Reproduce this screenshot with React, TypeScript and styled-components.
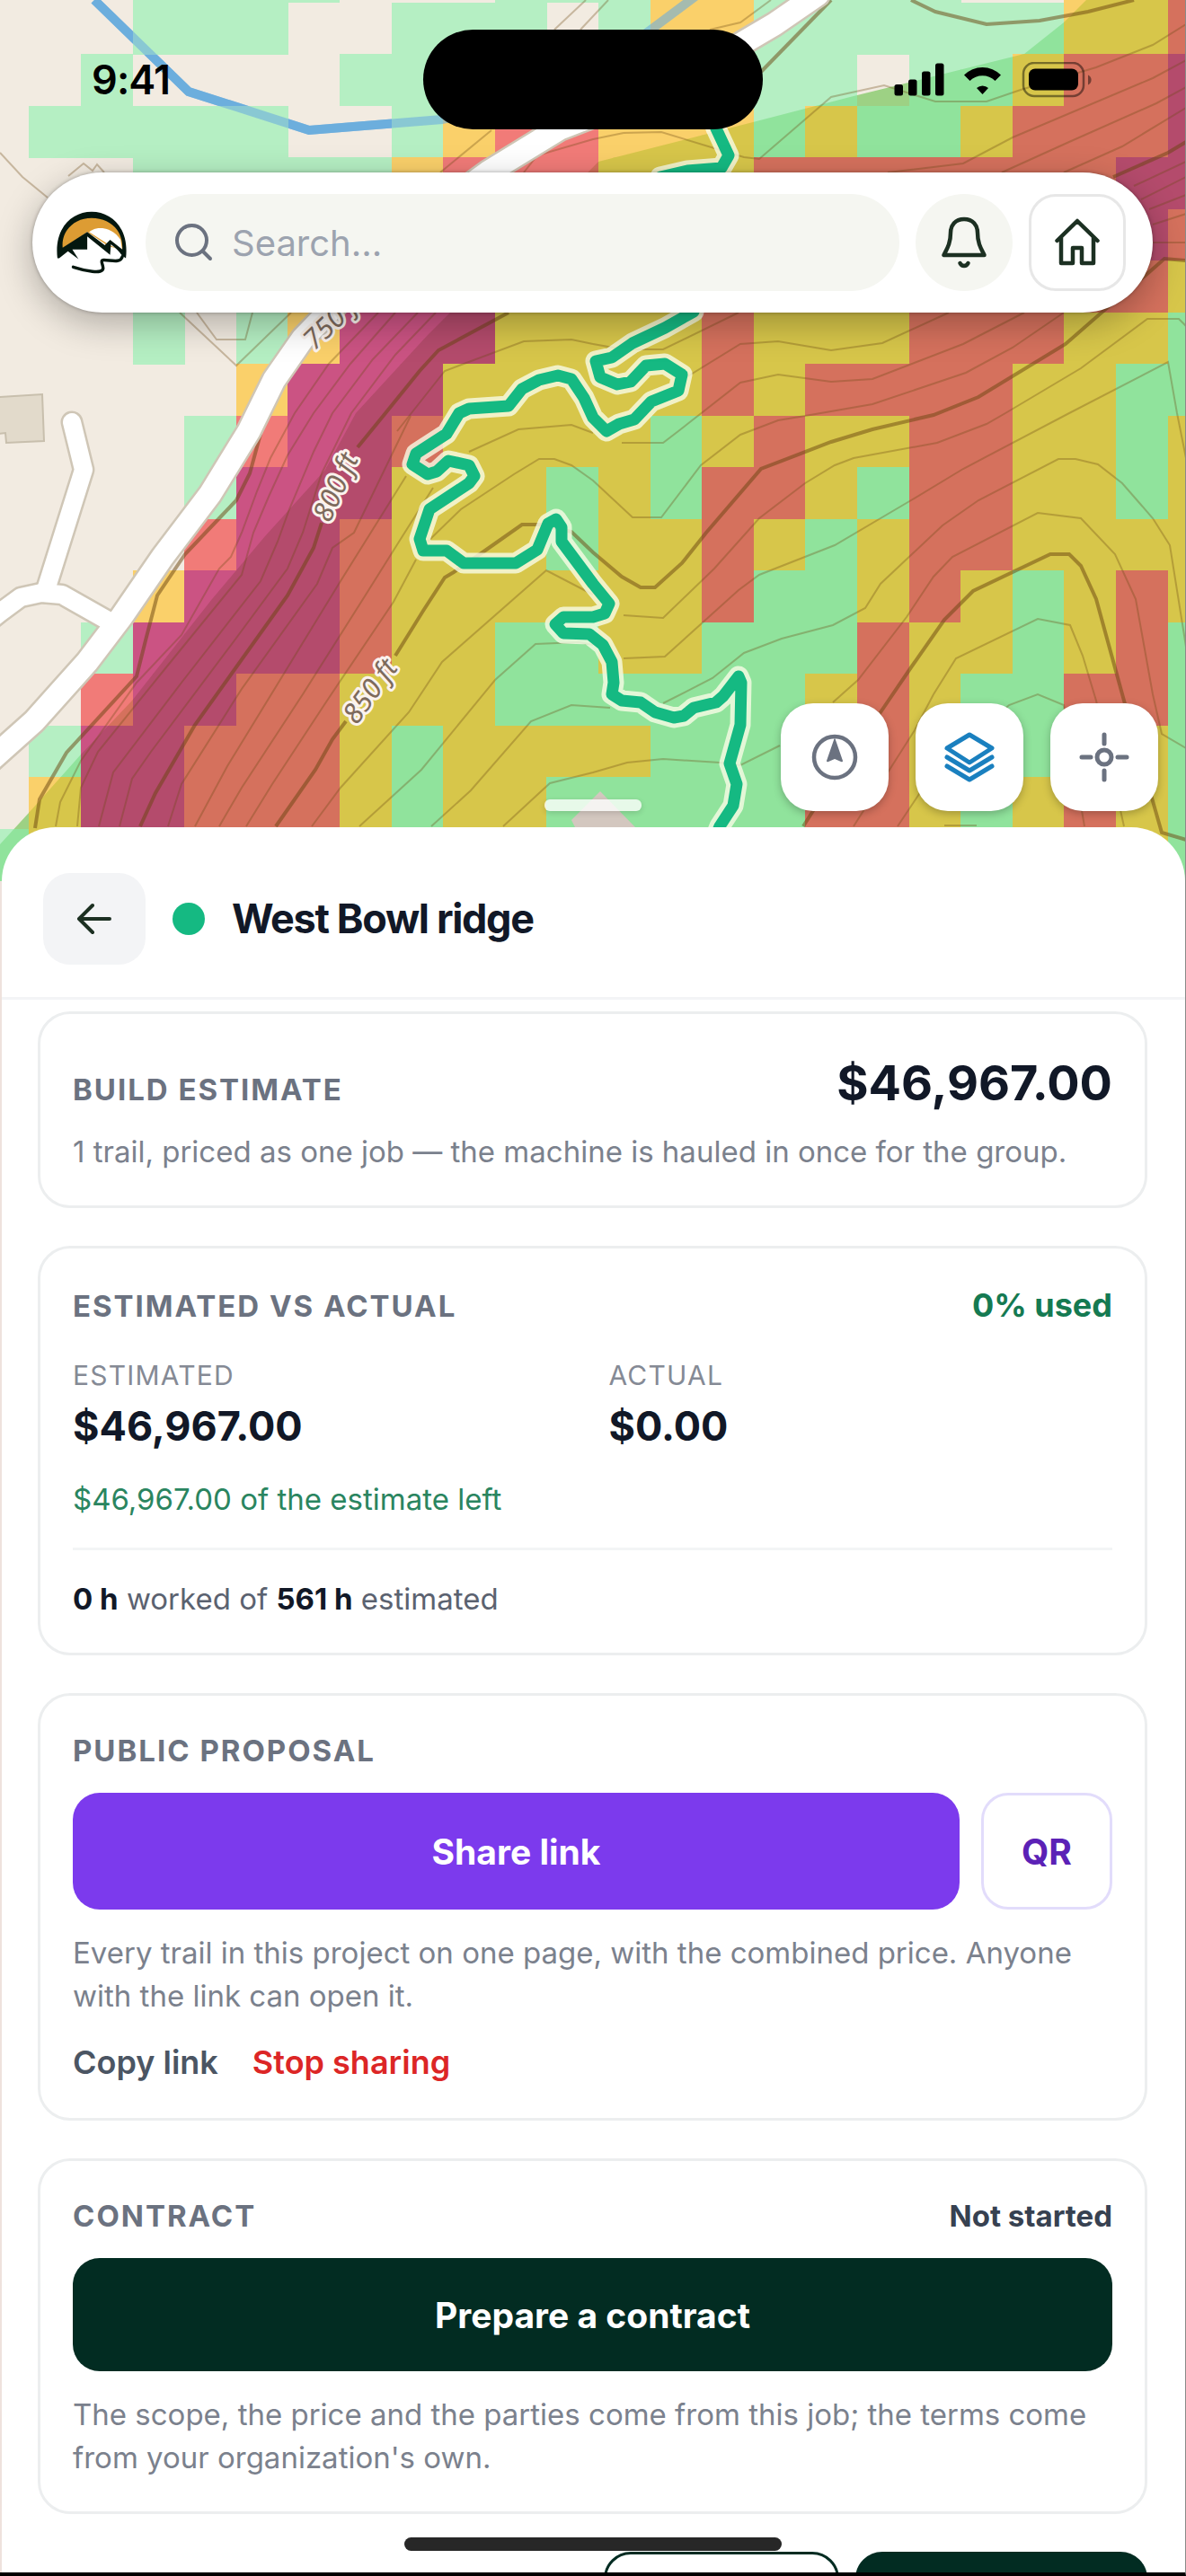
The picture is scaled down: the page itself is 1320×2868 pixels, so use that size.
import React from "react";
import styled, { createGlobalStyle } from "styled-components";

const GlobalStyle = createGlobalStyle`
  * {
    box-sizing: border-box;
  }
  body {
    margin: 0;
    background: #ffffff;
    font-family: Inter, "Liberation Sans", sans-serif;
    color: #111827;
  }
  button, input {
    font-family: inherit;
  }
  p, h1, h2, dl, dt, dd {
    margin: 0;
  }
`;

const Screen = styled.div`
  position: relative;
  height: 100vh;
  overflow: hidden;
  display: flex;
  flex-direction: column;
  border-right: 1px solid #8a8a88;
  border-bottom: 4px solid #000000;
  background: #eee2dd;
`;

/* ---------- map ---------- */

const MapArea = styled.header`
  position: relative;
  flex: none;
  height: 981px;
  display: flex;
  flex-direction: column;
  padding-bottom: 78px;
  overflow: hidden;
  .map {
    position: absolute;
    inset: 0;
    width: 100%;
    height: 100%;
  }
`;

const StatusBar = styled.div`
  position: relative;
  display: grid;
  grid-template-columns: 1fr 378px 1fr;
  align-items: center;
  padding-top: 33px;
  .time {
    padding-left: 102px;
    font-size: 45px;
    line-height: 54px;
    font-weight: 600;
    letter-spacing: -0.02em;
    color: #000000;
  }
  .island {
    height: 111px;
    border-radius: 56px;
    background: #000000;
  }
  .signals {
    display: flex;
    justify-content: flex-end;
    align-items: center;
    padding-right: 102px;
  }
`;

const TopBar = styled.div`
  position: relative;
  display: flex;
  align-items: center;
  gap: 18px;
  height: 156px;
  margin: 48px 36px 0;
  padding: 0 30px 0 24px;
  border-radius: 78px;
  background: #ffffff;
  box-shadow: 0 0 4px rgba(0, 0, 0, 0.3), 0 12px 40px rgba(0, 0, 0, 0.28);
`;

const SearchBox = styled.label`
  flex: 1;
  min-width: 0;
  height: 108px;
  display: flex;
  align-items: center;
  gap: 18px;
  padding: 0 30px;
  border-radius: 54px;
  background: #f5f6f1;
  svg {
    flex: none;
  }
  input {
    flex: 1;
    min-width: 0;
    border: 0;
    padding: 0;
    outline: none;
    background: transparent;
    font-size: 40px;
    color: #111827;
    &::placeholder {
      color: #9ca3af;
      opacity: 1;
    }
  }
`;

const BarButton = styled.button<{ $outlined?: boolean }>`
  flex: none;
  width: 108px;
  height: 108px;
  display: flex;
  justify-content: center;
  align-items: center;
  padding: 0;
  border: ${(p) => (p.$outlined ? "3px solid #e7e7e7" : "0")};
  border-radius: ${(p) => (p.$outlined ? "30px" : "54px")};
  background: ${(p) => (p.$outlined ? "#ffffff" : "#f5f6f1")};
`;

const MapControls = styled.div`
  position: relative;
  display: flex;
  justify-content: flex-end;
  gap: 30px;
  margin-top: auto;
  padding-right: 30px;
`;

const MapButton = styled.button`
  width: 120px;
  height: 120px;
  display: flex;
  justify-content: center;
  align-items: center;
  padding: 0;
  border: 0;
  border-radius: 36px;
  background: #ffffff;
  box-shadow: 0 3px 10px rgba(0, 0, 0, 0.25);
`;

const DragHandle = styled.div`
  position: absolute;
  left: 50%;
  bottom: 78px;
  width: 108px;
  height: 13px;
  margin-left: -54px;
  border-radius: 6px;
  background: rgba(255, 255, 255, 0.78);
  box-shadow: 0 2px 6px rgba(0, 0, 0, 0.15);
`;

/* ---------- sheet ---------- */

const Sheet = styled.main`
  position: relative;
  flex: 1;
  min-height: 0;
  margin: -60px 0 0 2px;
  display: flex;
  flex-direction: column;
  overflow: hidden;
  border-radius: 60px 60px 0 0;
  background: #ffffff;
`;

const SheetHeader = styled.div`
  flex: none;
  display: flex;
  align-items: center;
  gap: 30px;
  padding: 51px 46px 36px;
  border-bottom: 3px solid #f3f4f6;
  h1 {
    font-size: 45px;
    line-height: 60px;
    font-weight: 700;
    letter-spacing: -0.03em;
  }
`;

const BackButton = styled.button`
  width: 114px;
  height: 102px;
  display: flex;
  justify-content: center;
  align-items: center;
  padding: 0;
  border: 0;
  border-radius: 30px;
  background: #f3f4f6;
`;

const Dot = styled.span`
  width: 36px;
  height: 36px;
  border-radius: 50%;
  background: #15b982;
`;

const SheetBody = styled.div`
  flex: 1;
  min-height: 0;
  overflow: hidden;
  display: flex;
  flex-direction: column;
  gap: 42px;
  padding: 13px 42px 0 40px;
  & > * {
    flex: none;
  }
`;

const Card = styled.section`
  padding: 36px;
  border: 3px solid #eceeef;
  border-radius: 36px;
  background: #ffffff;
`;

const CardHead = styled.div`
  display: flex;
  justify-content: space-between;
  align-items: baseline;
  h2 {
    font-size: 33px;
    line-height: 50px;
    font-weight: 700;
    letter-spacing: 0.06em;
    text-transform: uppercase;
    color: #6b7280;
  }
  .price {
    font-size: 54px;
    line-height: 81px;
    font-weight: 700;
  }
  .used {
    font-size: 36px;
    line-height: 54px;
    font-weight: 700;
    color: #157a52;
  }
  .state {
    font-size: 33px;
    line-height: 50px;
    font-weight: 700;
    color: #374151;
  }
`;

const Note = styled.p<{ $gap: number; $color?: string }>`
  margin-top: ${(p) => p.$gap}px;
  font-size: 33px;
  line-height: 48px;
  color: ${(p) => p.$color || "#7b818d"};
  strong {
    font-weight: 700;
    color: #111827;
  }
`;

const Figures = styled.dl`
  display: grid;
  grid-template-columns: 1fr 1fr;
  gap: 36px;
  margin-top: 30px;
  dt {
    font-size: 30px;
    line-height: 42px;
    letter-spacing: 0.04em;
    text-transform: uppercase;
    color: #858a95;
  }
  dd {
    margin-top: 3px;
    font-size: 45px;
    line-height: 66px;
    font-weight: 700;
  }
`;

const Divider = styled.hr`
  height: 3px;
  margin: 30px 0 0;
  border: 0;
  background: #f3f5f6;
`;

const Actions = styled.div`
  display: flex;
  gap: 24px;
  margin-top: 22px;
`;

const Action = styled.button<{ $kind: "share" | "qr" | "dark" }>`
  flex: ${(p) => (p.$kind === "qr" ? "none" : "1")};
  width: ${(p) => (p.$kind === "qr" ? "146px" : "auto")};
  height: ${(p) => (p.$kind === "dark" ? "126px" : "130px")};
  padding: 0;
  border: ${(p) => (p.$kind === "qr" ? "3px solid #e2dcfb" : "0")};
  border-radius: 30px;
  font-size: 39px;
  font-weight: 700;
  color: ${(p) => (p.$kind === "qr" ? "#5b21b6" : "#ffffff")};
  background: ${(p) => ({ share: "#7c3aed", qr: "#ffffff", dark: "#022c22" })[p.$kind]};
`;

const Links = styled.div`
  display: flex;
  gap: 38px;
  margin-top: 24px;
`;

const LinkButton = styled.button<{ $danger?: boolean }>`
  padding: 0;
  border: 0;
  background: none;
  font-size: 36px;
  line-height: 52px;
  font-weight: 600;
  color: ${(p) => (p.$danger ? "#dc2626" : "#4b5563")};
`;

const Footer = styled.div`
  display: flex;
  justify-content: flex-end;
  gap: 18px;
`;

const FooterButton = styled.button<{ $solid?: boolean }>`
  width: ${(p) => (p.$solid ? "325px" : "262px")};
  height: 126px;
  border: 3px solid #022c22;
  border-radius: 30px;
  background: ${(p) => (p.$solid ? "#022c22" : "#ffffff")};
`;

const HomeIndicator = styled.div`
  position: absolute;
  left: 50%;
  bottom: 24px;
  width: 420px;
  height: 15px;
  margin-left: -210px;
  border-radius: 8px;
  background: #272727;
`;

/* ---------- map drawing ---------- */

type Palette = Record<string, string>;

const OPEN_LAND: Palette = { G: "#b5efc3", Y: "#fad06a", R: "#f17b78", M: "#cb5383" };
const WOODS: Palette = { G: "#90e39c", Y: "#d7c64a", R: "#d5715d", M: "#b44b6c", ".": "#9dd184" };

// slope classes, one letter per cell; the first row starts above the top edge
const SLOPES = [
  "...GGGG...GGGYYGGGG..YYR",
  "...GGG..GGG.GYYGGGGGGYYR",
  "..G....GGGGGGYYGG.GGYRRM",
  ".GGGGG..GYRRYYYGYGGYRRRM",
  "...GGGGGYRRRYYYRRRRRRRMM",
  "...GGGGGYRRRYYYRRRRRRRMR",
  "...GGGYMMMYYYYYRYYYRRRRY",
  "...G.GYMMMYYYYRYYYRRRYYG",
  ".....YMMMYYYYYRYRRRRYYGG",
  "....GRMMRYYYYGYRYYRRYYGY",
  "....GMMMYYYGYGRRYGRRYYGY",
  "....RMMRYYYGYYRYGYRRYYYY",
  "...YMMMRYYYYYYRGGYRYGYRY",
  "..GMMMMRYYGGYYGGGRYYGYRG",
  "..RMMRRYYYGGGGGGYRYGGRRG",
  ".GMMRRRYGYYYYGGGGRYGGRYG",
  ".YMMRRRYGYYGGGGGRRYGYRYG",
  "GYMMRRRYGYYGGGGGRRYGYRYG",
];

const CELL = 57.6;

const SlopeGrid = ({ palette }: { palette: Palette }) => (
  <g shapeRendering="crispEdges">
    {SLOPES.map((row, r) =>
      row.split("").map((kind, c) =>
        palette[kind] ? (
          <rect key={`${r}-${c}`} x={-25.2 + c * CELL} y={-54.8 + r * 57.5} width={CELL + 0.3} height={57.8} fill={palette[kind]} />
        ) : null
      )
    )}
  </g>
);

const STREAM = "105,0 210,102 344,145 492,133 600,110 719,37 774,-4";
const WOOD_EDGE =
  "-10,955 0,940 32,905 90,840 147,780 236,667 295,597 362,523 396,460 476,373 501,348 666,180 838,136 950,107 1140,60 1184,25 1211,-2 1325,-2 1325,985 -10,985";
const MAIN_ROAD = "-10,846 0,837 38,803 97,737 135,687 181,620 234,550 277,480 305,423 337,377 366,347 450,260 543,192 623,143 760,90 828,47 862,27 910,-6";
const SIDE_ROADS = ["80,470 93,523 50,660", "-10,690 0,682 23,665 46,660 69,662 122,692"];

const TRAIL =
  "772,347 740,365 704,382 681,398 663,402 668,420 687,428 702,425 719,407 740,405 759,417 755,435 725,447 706,467 689,472 675,480 660,465 650,443 636,422 621,418 600,423 581,433 566,452 522,455 511,460 497,483 463,505 459,517 476,528 486,525 499,513 522,518 528,530 522,538 478,567 467,600 471,613 497,613 516,627 574,627 598,612 610,583 619,578 625,587 625,603 660,650 678,672 673,683 660,687 627,687 618,695 627,705 656,706 671,718 681,737 683,760 681,773 692,780 713,782 729,793 750,799 761,797 772,788 797,782 805,775 822,753 825,760 824,807 812,850 820,873 816,897 801,920 795,935";
const TRAIL_TOP = "793,130 797,143 811,173 803,187 765,190 735,197";

const CONTOURS = [
  "0,170 25,197 53,220",
  "76,196 93,182 103,190 108,183 116,192",
  "200,348 263,407 324,348",
  "219,348 241,378 273,378 281,348",
  "490,192 547,145",
  "617,33 652,0",
  "646,33 677,0",
  "583,192 598,173 660,155 694,148 736,147 795,165 828,175 845,177 925,108 984,95 1041,113 1098,113 1136,100 1220,75 1283,50 1320,27",
  "790,33 824,25 858,0",
  "988,192 1072,182 1127,153 1283,87 1320,67",
  "1115,192 1190,158 1287,115 1320,97",
  "1184,192 1249,163 1320,120",
  "1262,207 1320,180",
  "1270,222 1320,197",
  "1279,233 1320,217",
  "1283,250 1320,238",
  "1283,270 1320,270",
  "660,383 694,389 738,389 822,348",
  "759,423 824,383 866,380 925,390 982,382 1056,348",
  "692,493 738,493 755,480 824,426 866,417 925,425 971,422 1072,383 1140,348",
  "1184,348 1127,387 1075,415 971,450 896,463 866,468 824,484 780,518 736,576 704,576 660,535 636,518 617,511 600,511 572,528 513,567 476,603",
  "1320,363 1312,355 1277,355 1203,410 1119,460 1098,472 1043,493 950,510 929,518 896,538 845,577 795,633 738,688 694,685",
  "1320,510 1310,460 1300,403 1190,460 1072,522 1014,557 929,607 845,640 822,657 740,731 694,733",
  "1320,720 1302,607 1283,577 1249,538 1222,517 1197,511 1178,511 1089,557 1049,585 980,650 963,677 927,696 870,711 828,727 793,755 738,783",
  "1320,833 1293,817 1283,773 1264,667 1241,617 1203,577 1155,571 1060,620 1039,642 1009,687 955,757 927,782",
  "868,830 824,852 801,849 738,845 698,849 660,860 612,872 560,920",
  "1251,920 1220,780 1205,730 1191,696 1155,689 1064,733 1039,773 1018,813 950,920",
  "1207,920 1184,785 1155,773 1123,785 1039,860 999,920",
  "1051,919 1087,919",
  "421,348 366,405 328,460 301,510 286,547 269,593 257,620 244,633 202,707 152,760 90,847 67,893 62,920",
  "440,348 390,405 349,460 320,507 299,553 282,593 269,640 185,743 109,837 90,877 86,920",
  "465,348 415,400 370,460 349,503 322,567 309,603 290,647 202,760 126,860 110,920",
  "485,348 440,395 391,460 358,527 337,593 320,633 261,713 168,837 147,867 133,920",
  "457,463 394,593 370,610 353,650 269,767 202,873 187,920",
  "452,530 379,647 316,750 253,853 217,920",
  "482,543 446,600 404,667 337,773 269,877 244,920",
  "463,623 438,670 366,777 303,873 274,920",
  "660,662 608,635 492,737 455,793 379,877 347,920",
  "660,718 644,715 596,717 551,757 469,857 400,920",
  "679,788 636,785 591,803 524,880 480,920",
  "442,480 495,413 583,380 636,378 660,383",
  "522,503 577,478 636,473 660,482",
];

const INDEX_CONTOURS = [
  "847,80 925,0",
  "1014,0 1041,13 1098,27 1157,23 1211,13 1262,0",
  "1239,197 1300,170 1320,158",
  "1320,290 1296,288 1279,303 1226,348 1186,383 1089,442 1039,462 971,478 925,492 847,522 786,593 759,627 729,654 713,654 692,642 660,615 636,592 602,584 581,584 537,615 505,637 495,643 471,680 440,730",
  "385,803 370,823 351,857 307,920",
  "1320,935 1293,927 1251,780 1220,667 1203,630 1190,617 1169,617 1083,658 1051,690 1014,743 980,793 913,890 894,920",
  "290,483 278,527 263,557 244,577 206,617 175,663 162,713 152,753 74,838 44,890 39,922",
  "566,348 488,390 467,413 429,460 398,498",
  "358,582 349,610 320,663 217,807 173,883 156,920",
];

const MAP_LABELS = [
  { text: "750 ft", x: 350, y: 391, angle: -44 },
  { text: "800 ft", x: 367, y: 583, angle: -66 },
  { text: "850 ft", x: 397, y: 808, angle: -54 },
];

const TerrainMap = () => (
  <svg className="map" viewBox="0 0 1320 981" preserveAspectRatio="xMinYMin slice" aria-hidden="true">
    <defs>
      <clipPath id="woods">
        <polygon points={WOOD_EDGE} />
      </clipPath>
    </defs>
    <rect width="1320" height="981" fill="#f2ebe1" />
    <polyline points={STREAM} fill="none" stroke="#6caedd" strokeWidth="10" />
    <SlopeGrid palette={OPEN_LAND} />
    <g clipPath="url(#woods)">
      <SlopeGrid palette={WOODS} />
    </g>
    <polyline points={STREAM} fill="none" stroke="#6caedd" strokeWidth="10" opacity="0.6" />
    <polygon points="-2,442 47,439 49,491 7,493 6,482 -2,483" fill="#e2dacb" stroke="#c8bfad" strokeWidth="2" />
    <polygon points="668,881 707,921 640,921 636,913" fill="#d3c7bf" />
    <g fill="none" stroke="#6e4a14" strokeWidth="2" opacity="0.32">
      {CONTOURS.map((points) => (
        <polyline key={points} points={points} />
      ))}
    </g>
    <g fill="none" stroke="#6b4510" strokeWidth="4" opacity="0.5">
      {INDEX_CONTOURS.map((points) => (
        <polyline key={points} points={points} />
      ))}
    </g>
    <g fill="none" strokeLinecap="round" strokeLinejoin="round">
      {SIDE_ROADS.map((points) => (
        <polyline key={points} points={points} stroke="#cfc6b6" strokeWidth="25" />
      ))}
      <polyline points={MAIN_ROAD} stroke="#cfc6b6" strokeWidth="30" />
      {SIDE_ROADS.map((points) => (
        <polyline key={points} points={points} stroke="#ffffff" strokeWidth="20" />
      ))}
      <polyline points={MAIN_ROAD} stroke="#ffffff" strokeWidth="25" />
      {[TRAIL_TOP, TRAIL].map((points) => (
        <polyline key={points} points={points} stroke="#f8fbe6" strokeWidth="23" opacity="0.8" />
      ))}
      {[TRAIL_TOP, TRAIL].map((points) => (
        <polyline key={points} points={points} stroke="#15b982" strokeWidth="13" />
      ))}
    </g>
    {MAP_LABELS.map(({ text, x, y, angle }) => (
      <text
        key={text}
        transform={`translate(${x} ${y}) rotate(${angle})`}
        fontFamily="'Noto Sans', sans-serif"
        fontStyle="italic"
        fontSize="31"
        fill="#7d6a5c"
        stroke="#fbf3ee"
        strokeWidth="6"
        strokeLinejoin="round"
        paintOrder="stroke"
      >
        {text}
      </text>
    ))}
  </svg>
);

/* ---------- icons ---------- */

const SignalIcons = () => (
  <svg width="222" height="40" viewBox="994 68 222 40" role="img" aria-label="Signal, Wi-Fi and battery">
    <rect x="994.500" y="93" width="9.500" height="12.500" rx="2.500" />
    <rect x="1010" y="87.500" width="9.500" height="18" rx="2.500" />
    <rect x="1025" y="78.500" width="9.500" height="27" rx="2.500" />
    <rect x="1040" y="69.500" width="9.500" height="36" rx="2.500" />
    <path d="M1072 82.500a29 29 0 0 1 41 0l-6.500 6.500a20 20 0 0 0-28 0Z" />
    <path d="M1086 97a9.500 9.500 0 0 1 13 0l-6.500 7Z" />
    <rect x="1138" y="69" width="67" height="37" rx="12" fill="none" stroke="#000000" strokeWidth="2.500" opacity="0.45" />
    <rect x="1144" y="75.500" width="55" height="24" rx="7" />
    <path d="M1210 82.500a6 6 0 0 1 0 11Z" opacity="0.45" />
  </svg>
);

const Logo = () => (
  <svg width="84" height="84" viewBox="-2 -7 86 86" role="img" aria-label="Home page">
    <path d="M6 45A36.500 36.500 0 1 1 78 45L60 40L36 24Z" fill="#dd9c33" />
    <path d="M38 24C48 16 65 19 74 33L76 46L60 38Z" fill="#ffffff" />
    <path
      d="M2 54C-2 20 18 1 41 1S84 20 80 54L76 51C74 49 71 44 63 38L62 50L36 29V44H19L26 55L14 46L4 54Z M8 42L36 24L56 39L62 33L76 44C77 22 62 8 41 8S6 24 8 42Z"
      fill="#04170f"
      fillRule="evenodd"
    />
    <path d="M20 64C32 68 55 73 54 65C54 61 50 56 55 56C63 56 74 60 76 52" fill="none" stroke="#04170f" strokeWidth="3.500" strokeLinecap="round" />
  </svg>
);

const Line = styled.svg<{ $color: string; $width: number }>`
  fill: none;
  stroke: ${(p) => p.$color};
  stroke-width: ${(p) => p.$width};
  stroke-linecap: round;
  stroke-linejoin: round;
`;

const App = () => {
  return (
    <>
      <GlobalStyle />
      <Screen>
        <MapArea>
          <TerrainMap />
          <StatusBar>
            <span className="time">9:41</span>
            <span className="island"></span>
            <span className="signals">
              <SignalIcons />
            </span>
          </StatusBar>
          <TopBar>
            <Logo />
            <SearchBox aria-label="Search">
              <Line $color="#6b7280" $width={4} width="48" height="48" viewBox="0 0 48 48">
                <circle cx="21.500" cy="21.500" r="16.500" />
                <path d="M34 34l8 8" />
              </Line>
              <input type="text" placeholder="Search..." />
            </SearchBox>
            <BarButton aria-label="Notifications">
              <Line $color="#1c3022" $width={4.5} width="60" height="60" viewBox="0 0 60 60">
                <path d="M30 4C20 4 15 11 15 19C15 31 11 37 7.500 44H52.500C49 37 45 31 45 19C45 11 40 4 30 4Z" />
                <path d="M25.500 53c2 4 7 4 9 0" />
              </Line>
            </BarButton>
            <BarButton $outlined aria-label="Home">
              <Line $color="#1c3022" $width={4.5} width="60" height="60" viewBox="0 0 60 60">
                <path d="M7.500 28L30 6L52.500 28M12 24V53H25V36H35V53H48V24" />
              </Line>
            </BarButton>
          </TopBar>
          <MapControls>
            <MapButton aria-label="North up">
              <svg width="60" height="60" viewBox="0 0 60 60">
                <circle cx="30" cy="30" r="23" fill="none" stroke="#6b7280" strokeWidth="4.500" />
                <path d="M30 8L39 34Q39 36 37 35L30 32L23 35Q21 36 21 34Z" fill="#6b7280" />
              </svg>
            </MapButton>
            <MapButton aria-label="Layers">
              <Line $color="#1a80bf" $width={5} width="60" height="60" viewBox="0 0 60 60">
                <path d="M30 5L55 20L30 36L5 20Z" />
                <path d="M5 30L30 45L55 30" />
                <path d="M5 40L30 55L55 40" />
              </Line>
            </MapButton>
            <MapButton aria-label="My location">
              <Line $color="#6b7280" $width={5} width="60" height="60" viewBox="0 0 60 60">
                <circle cx="30" cy="30" r="8" />
                <path d="M30 5V15M30 45V55M5 30H15M45 30H55" />
              </Line>
            </MapButton>
          </MapControls>
          <DragHandle />
        </MapArea>

        <Sheet>
          <SheetHeader>
            <BackButton aria-label="Back">
              <Line $color="#1c3022" $width={4} width="42" height="42" viewBox="0 0 42 42">
                <path d="M38 21H4M19 6L4 21L19 36" />
              </Line>
            </BackButton>
            <Dot />
            <h1>West Bowl ridge</h1>
          </SheetHeader>

          <SheetBody>
            <Card>
              <CardHead>
                <h2>Build estimate</h2>
                <span className="price">$46,967.00</span>
              </CardHead>
              <Note $gap={12}>1 trail, priced as one job — the machine is hauled in once for the group.</Note>
            </Card>

            <Card>
              <CardHead>
                <h2>Estimated vs actual</h2>
                <span className="used">0% used</span>
              </CardHead>
              <Figures>
                <div>
                  <dt>Estimated</dt>
                  <dd>$46,967.00</dd>
                </div>
                <div>
                  <dt>Actual</dt>
                  <dd>$0.00</dd>
                </div>
              </Figures>
              <Note $gap={24} $color="#2a8560">
                $46,967.00 of the estimate left
              </Note>
              <Divider />
              <Note $gap={30} $color="#5b6270">
                <strong>0 h</strong> worked of <strong>561 h</strong> estimated
              </Note>
            </Card>

            <Card>
              <CardHead>
                <h2>Public proposal</h2>
              </CardHead>
              <Actions>
                <Action $kind="share">Share link</Action>
                <Action $kind="qr">QR</Action>
              </Actions>
              <Note $gap={24}>Every trail in this project on one page, with the combined price. Anyone with the link can open it.</Note>
              <Links>
                <LinkButton>Copy link</LinkButton>
                <LinkButton $danger>Stop sharing</LinkButton>
              </Links>
            </Card>

            <Card>
              <CardHead>
                <h2>Contract</h2>
                <span className="state">Not started</span>
              </CardHead>
              <Actions>
                <Action $kind="dark">Prepare a contract</Action>
              </Actions>
              <Note $gap={24}>The scope, the price and the parties come from this job; the terms come from your organization's own.</Note>
            </Card>

            <Footer>
              <FooterButton aria-label="Secondary action" />
              <FooterButton $solid aria-label="Primary action" />
            </Footer>
          </SheetBody>
        </Sheet>
        <HomeIndicator />
      </Screen>
    </>
  );
};

export default App;
